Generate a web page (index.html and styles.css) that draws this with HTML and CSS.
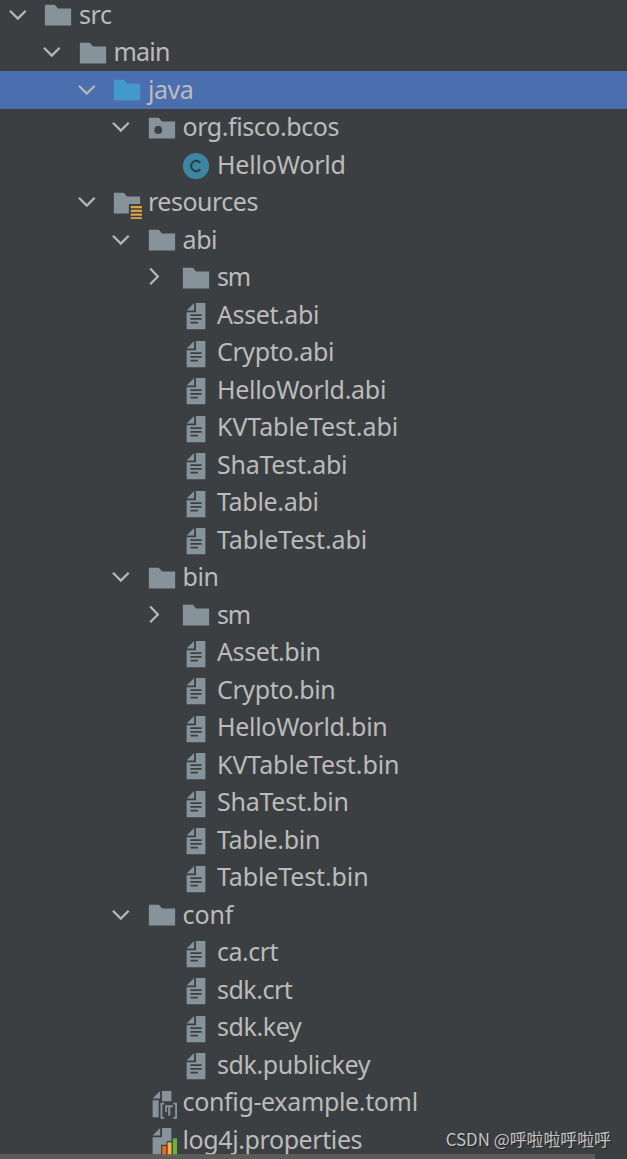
FILE: index.html
```html
<!DOCTYPE html>
<html lang="en">

<head>
    <meta charset="UTF-8">
    <meta name="viewport" content="width=device-width, initial-scale=1.0">
    <title>Project</title>
    <link rel="stylesheet" href="styles.css">
</head>

<body>
    <svg class="sprite">
        <symbol id="down" viewBox="0 0 16 16">
            <path class="chevron" d="M3.7 5.7l4.2 4.2l4.2-4.2" />
        </symbol>
        <symbol id="right" viewBox="0 0 16 16">
            <path class="chevron" d="M4.9 3.5L9 7.7l-4.1 4.2" />
        </symbol>
        <symbol id="folder" viewBox="0 0 16 16">
            <path d="M1 13h14V4H8L6.7 2.4Q6.4 2 6 2H1z" />
        </symbol>
        <symbol id="package" viewBox="0 0 16 16">
            <path fill-rule="evenodd" d="M1 13h14V4H8L6.7 2.4Q6.4 2 6 2H1zM6 6.4a2.1 2.1 0 1 1 0 4.2a2.1 2.1 0 1 1 0-4.2z" />
        </symbol>
        <symbol id="resources" viewBox="0 0 16 16">
            <path d="M1 13h8V8h6V4H8L6.7 2.4Q6.4 2 6 2H1z" />
            <path class="gold" d="M10 9h6v1.2h-6zM10 11h6v1.2h-6zM10 13h6v1.2h-6zM10 15h6v1.2h-6z" />
        </symbol>
        <symbol id="class" viewBox="0 0 16 16">
            <circle class="teal" cx="8" cy="8" r="7" />
            <path class="letter" d="M10.3 6.3A2.75 2.75 0 1 0 10.3 9.7" />
        </symbol>
        <symbol id="file" viewBox="0 0 16 16">
            <path d="M7 1L3 5h4z" />
            <path fill-rule="evenodd" d="M8 1v5H3v9h10V1zM5 7h6v1H5zM5 9h6v1H5zM5 11h4v1H5z" />
        </symbol>
        <symbol id="toml" viewBox="0 0 16 16">
            <path d="M7 1L3 5h4z" />
            <path d="M3 6h3.2v9H3zM8 1h5v5.5H8z" />
            <path d="M7.2 7.3h2v1h-1v6.6h1v1h-2zM14 7.3h2v8.6h-2v-1h1V8.3h-1z" />
            <path d="M9.7 8.6h4.1v1.1h-1.4v4.5h-1.1V9.7h-.7v2.6h-.9z" />
        </symbol>
        <symbol id="log" viewBox="0 0 16 16">
            <path d="M7 1L3 5h4z" />
            <path d="M8 1v5H3v9h4.5V10h3V8H13V1z" />
            <path class="red" d="M8.1 10.7h2.2v5.2H8.1z" />
            <path class="yellow" d="M11 8.7h2.1v7.2H11z" />
            <path class="green" d="M13.8 6.6H16v9.3h-2.2z" />
        </symbol>
    </svg>

    <div class="tree" id="tree"></div>
    <div class="scrollbar"></div>
    <div class="watermark">CSDN @呼啦啦呼啦呼</div>

    <script src="tree.js"></script>
</body>

</html>
```
FILE: styles.css
```css
body {
    margin: 0;
    height: 1159px;
    position: relative;
    overflow: hidden;
    background: #3c3f41;
    color: #bbbbbb;
    font-family: "Noto Sans", sans-serif;
    font-size: 25px;
}

.sprite {
    display: none;
}

.row {
    box-sizing: border-box;
    display: flex;
    align-items: center;
    height: 37.5px;
    padding-left: calc(2.5px + var(--level) * 34.5px);
    white-space: nowrap;
}

/* the list is scrolled a few pixels down */
.row:first-child {
    height: 33.5px;
    padding-bottom: 4px;
}

.row.selected {
    background: #4b6eaf;
}

.arrow,
.icon {
    flex: none;
    width: 30px;
    height: 30px;
}

.arrow {
    margin-right: 10.5px;
}

.icon {
    margin-top: 3px;
    margin-right: 6px;
    fill: #87939a;
}

.selected .icon {
    fill: #4398ce;
}

.label {
    margin-bottom: 1.6px;
    line-height: 28px;
    letter-spacing: var(--tracking);
}

.chevron {
    fill: none;
    stroke: #b4b6b7;
    stroke-width: 1.2;
}

.gold {
    fill: #d9a343;
}

.teal {
    fill: #3e86a0;
}

.letter {
    fill: none;
    stroke: #263f49;
    stroke-width: 1.1;
}

.red {
    fill: #f26522;
}

.yellow {
    fill: #f4af3d;
}

.green {
    fill: #62b543;
}

.scrollbar {
    position: absolute;
    left: 0;
    bottom: 0;
    width: 595px;
    height: 5px;
    background: rgba(96, 97, 98, 0.85);
}

.watermark {
    position: absolute;
    right: 16px;
    bottom: 8px;
    color: #c4c5c6;
    font: 16.9px/24px "Noto Sans CJK SC", sans-serif;
    text-shadow: 1px 1px 1px #222;
}
```
FILE: tree.js
```js
// [level, icon, label, arrow, letter spacing]
const rows = [
    [0, 'folder', 'src', 'down', -0.4],
    [1, 'folder', 'main', 'down', -0.8],
    [2, 'folder', 'java', 'down', -0.5],
    [3, 'package', 'org.fisco.bcos', 'down', -0.43],
    [4, 'class', 'HelloWorld', '', -0.2],
    [2, 'resources', 'resources', 'down', -0.5],
    [3, 'folder', 'abi', 'down', -0.4],
    [4, 'folder', 'sm', 'right', -1.2],
    [4, 'file', 'Asset.abi', '', -0.4],
    [4, 'file', 'Crypto.abi', '', -0.4],
    [4, 'file', 'HelloWorld.abi', '', -0.3],
    [4, 'file', 'KVTableTest.abi', '', -0.07],
    [4, 'file', 'ShaTest.abi', '', -0.25],
    [4, 'file', 'Table.abi', '', -0.3],
    [4, 'file', 'TableTest.abi', '', -0.12],
    [3, 'folder', 'bin', 'down', -0.4],
    [4, 'folder', 'sm', 'right', -1.2],
    [4, 'file', 'Asset.bin', '', -0.4],
    [4, 'file', 'Crypto.bin', '', -0.4],
    [4, 'file', 'HelloWorld.bin', '', -0.3],
    [4, 'file', 'KVTableTest.bin', '', -0.07],
    [4, 'file', 'ShaTest.bin', '', -0.25],
    [4, 'file', 'Table.bin', '', -0.3],
    [4, 'file', 'TableTest.bin', '', -0.12],
    [3, 'folder', 'conf', 'down', -0.1],
    [4, 'file', 'ca.crt', '', -0.5],
    [4, 'file', 'sdk.crt', '', -0.5],
    [4, 'file', 'sdk.key', '', -0.4],
    [4, 'file', 'sdk.publickey', '', -0.4],
    [3, 'toml', 'config-example.toml', '', -0.35],
    [3, 'log', 'log4j.properties', '', -0.4]
];

document.getElementById('tree').innerHTML = rows.map(([level, icon, label, arrow, tracking]) => `
    <div class="row${label === 'java' ? ' selected' : ''}" style="--level: ${level}; --tracking: ${tracking}px">
        <svg class="arrow">${arrow ? `<use href="#${arrow}"/>` : ''}</svg>
        <svg class="icon"><use href="#${icon}"/></svg>
        <span class="label">${label}</span>
    </div>
`).join('');
```
